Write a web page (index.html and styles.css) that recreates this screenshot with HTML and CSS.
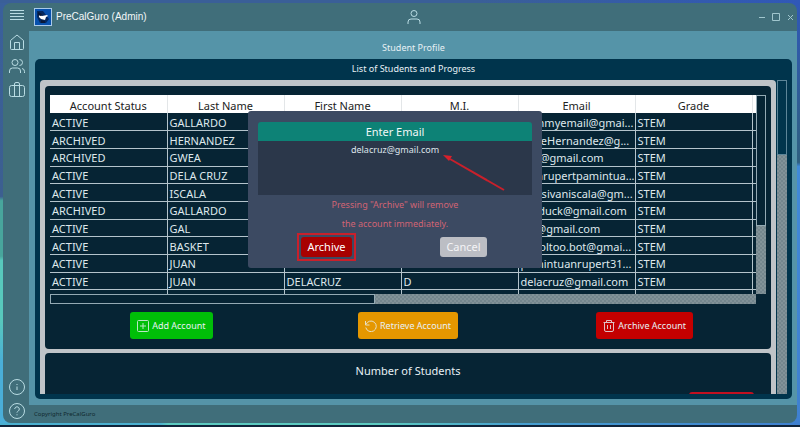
FILE: index.html
```html
<!DOCTYPE html>
<html lang="en">
<head>
<meta charset="utf-8">
<title>PreCalGuro (Admin)</title>
<link rel="stylesheet" href="styles.css">
</head>
<body>
<div class="window">
  <nav class="sidebar">
    <button class="icon-btn menu" aria-label="Menu"><svg viewBox="0 0 16 16"><path d="M1 3.500h14M1 6.500h14M1 9.500h14M1 12.500h14"/></svg></button>
    <button class="icon-btn" aria-label="Home"><svg viewBox="0 0 16 16"><path d="M1.5 6.5 8 1l6.500 5.500v8a1 1 0 0 1-1 1h-11a1 1 0 0 1-1-1zM5.500 15.500v-7h5v7"/></svg></button>
    <button class="icon-btn" aria-label="Students"><svg viewBox="0 0 16 16"><circle cx="6" cy="4.500" r="3"/><path d="M.5 15v-2a3 3 0 0 1 3-3h5a3 3 0 0 1 3 3v2M10.500 1.500a3 3 0 0 1 0 6M13 10.500a3 3 0 0 1 2.500 3V15"/></svg></button>
    <button class="icon-btn" aria-label="Portfolio"><svg viewBox="0 0 16 16"><rect x=".5" y="3.500" width="15" height="11" rx="2"/><path d="M5.500 14.500V2a1.500 1.500 0 0 1 1.500-1.500h2A1.500 1.500 0 0 1 10.500 2v12.500"/></svg></button>
    <span class="grow"></span>
    <button class="icon-btn" aria-label="Information"><svg viewBox="0 0 16 16"><circle cx="8" cy="8" r="7.500"/><path d="M8 7.500V11M8 5v1"/></svg></button>
    <button class="icon-btn" aria-label="Help"><svg viewBox="0 0 16 16"><circle cx="8" cy="8" r="7.500"/><path d="M5.700 6a2.300 2.300 0 1 1 3.600 2C8.300 8.600 8 9 8 9.700M8 11.300v1"/></svg></button>
  </nav>
  <div class="workspace">
    <header class="titlebar">
      <div class="brand">
        <svg class="logo" viewBox="0 0 18 18"><path fill="#a9c9e8" d="M0 0h18v18H0z"/><path fill="#0750ad" d="M1 1h16v16H1z"/><path fill="#05285e" d="M3 3h6l6 8-3 4H6L3 9z"/><path fill="#fff" d="m5 7 3 1 5-1 1 1-2 1-1 3-4-1-2-2z"/><path fill="#0b1836" d="m4 4 4 2-1 2-3-1zm3 8 4 1v2H7z"/></svg>
        <span>PreCalGuro (Admin)</span>
      </div>
      <button class="profile" aria-label="Profile"><svg viewBox="0 0 14 14"><circle cx="7" cy="3.500" r="3"/><path d="M1 14v-2a3 3 0 0 1 3-3h6a3 3 0 0 1 3 3v2"/></svg></button>
      <div class="controls">
        <button aria-label="Minimize"><svg viewBox="0 0 8 8"><path d="M1 4.500h6"/></svg></button>
        <button aria-label="Maximize"><svg viewBox="0 0 8 8"><path d="M.5.500h7v7h-7z"/></svg></button>
        <button aria-label="Close"><svg viewBox="0 0 8 8"><path d="m2 2 5 5M7 2 2 7"/></svg></button>
      </div>
    </header>
    <main class="content">
      <h1 class="page-title">Student Profile</h1>
      <section class="panel">
        <h2 class="panel-title">List of Students and Progress</h2>
        <div class="scroll-area">
          <div class="cards">
            <div class="card list-card">
              <div class="table-row">
                <table class="students">
                  <thead><tr><th>Account Status</th><th>Last Name</th><th>First Name</th><th>M.I.</th><th>Email</th><th>Grade</th><th class="sliver"></th></tr></thead>
                  <tbody>
                    <tr><td>ACTIVE</td><td>GALLARDO</td><td></td><td></td><td>dummyemail@gmai...</td><td>STEM</td><td></td></tr>
                    <tr><td>ARCHIVED</td><td>HERNANDEZ</td><td></td><td></td><td>JackeHernandez@g...</td><td>STEM</td><td></td></tr>
                    <tr><td>ARCHIVED</td><td>GWEA</td><td></td><td></td><td>gea@gmail.com</td><td>STEM</td><td></td></tr>
                    <tr><td>ACTIVE</td><td>DELA CRUZ</td><td></td><td></td><td>juanrupertpamintua...</td><td>STEM</td><td></td></tr>
                    <tr><td>ACTIVE</td><td>ISCALA</td><td></td><td></td><td>jesusivaniscala@gm...</td><td>STEM</td><td></td></tr>
                    <tr><td>ARCHIVED</td><td>GALLARDO</td><td></td><td></td><td>mriduck@gmail.com</td><td>STEM</td><td></td></tr>
                    <tr><td>ACTIVE</td><td>GAL</td><td></td><td></td><td>gal@gmail.com</td><td>STEM</td><td></td></tr>
                    <tr><td>ACTIVE</td><td>BASKET</td><td></td><td></td><td>hcooltoo.bot@gmai...</td><td>STEM</td><td></td></tr>
                    <tr><td>ACTIVE</td><td>JUAN</td><td></td><td></td><td>pamintuanrupert31...</td><td>STEM</td><td></td></tr>
                    <tr><td>ACTIVE</td><td>JUAN</td><td>DELACRUZ</td><td>D</td><td>delacruz@gmail.com</td><td>STEM</td><td></td></tr>
                    <tr class="rest"><td></td><td></td><td></td><td></td><td></td><td></td><td></td></tr>
                  </tbody>
                </table>
                <div class="bar vertical table-bar"><span class="thumb"></span></div>
              </div>
              <div class="bar horizontal"><span class="thumb"></span></div>
              <div class="actions">
                <button class="action add"><svg viewBox="0 0 12 12"><rect x=".5" y=".5" width="11" height="11" rx="1"/><path d="M6 3v6M3 6h6"/></svg>Add Account</button>
                <button class="action retrieve"><svg viewBox="0 0 12 12"><path d="M.5 1v4h4M1 4.500a5.300 5.300 0 1 1-.2 3"/></svg>Retrieve Account</button>
                <button class="action archive"><svg viewBox="0 0 12 12"><path d="M.5 2.500h11M3.500 2.500v-2h5v2M1.500 2.500V10a1.500 1.500 0 0 0 1.500 1.500h6a1.500 1.500 0 0 0 1.500-1.500V2.500M4.500 5v4M7.500 5v4"/></svg>Archive Account</button>
              </div>
            </div>
            <div class="card count-card">
              <h2 class="count-title">Number of Students</h2>
              <span class="count-mark"></span>
            </div>
          </div>
          <div class="bar vertical page-bar"><span class="thumb"></span></div>
        </div>
      </section>
    </main>
    <footer class="footer">Copyright PreCalGuro</footer>
  </div>
</div>
<div class="dialog" role="dialog" aria-label="Archive account">
  <label class="dialog-title" for="email">Enter Email</label>
  <textarea class="email" id="email" spellcheck="false">delacruz@gmail.com</textarea>
  <p class="warning">Pressing "Archive" will remove<br>the account immediately.</p>
  <div class="choices">
    <div class="choice"><span class="focus-box"><button class="choice-btn confirm">Archive</button></span></div>
    <div class="choice"><button class="choice-btn cancel">Cancel</button></div>
  </div>
  <svg class="arrow" viewBox="0 0 64 38"><path d="M62 36 8 5" stroke="#c9202b" stroke-width="2" fill="none"/><path d="m1 1 9 1-3 5z" fill="#d9202b"/></svg>
</div>
</body>
</html>
```

FILE: styles.css
```css
* { box-sizing: border-box; }

body {
  margin: 0;
  height: 100vh;
  padding: 3px 3px 4px;
  background:
    linear-gradient(#10243a, #10243a) bottom / 100% 2px no-repeat,
    linear-gradient(90deg, #4ab0d0 0, #4ab0d0 20%, #5ccac0 21%, #5ccac0 48%, #469fd0 65%, #3f80d0) bottom / 100% 4px no-repeat,
    linear-gradient(90deg, #3a5f98 60%, #3058b8) top / 100% 3px no-repeat,
    linear-gradient(#3a609c 0, #3c5f90 46%, #48a59c 47%, #48a59c 60%, #58c8bc 61%, #58c8bc 75%, #4aaed8 85%) left / 50% 100% no-repeat,
    linear-gradient(#3058b8 0, #2f6080 38%, #408ad8 39%, #3f80d0);
  color: #e8f1f5;
  font: 9px/14px "Noto Sans", "Open Sans", sans-serif;
  overflow: hidden;
}

button {
  border: 0;
  padding: 0;
  background: none;
  color: inherit;
  font: inherit;
}

h1, h2, p { margin: 0; font-weight: normal; }

svg {
  display: block;
  fill: none;
  stroke: currentColor;
}

.window {
  display: flex;
  height: 100%;
  border-radius: 8px;
  overflow: hidden;
  background: #406e7a;
}

.sidebar {
  display: flex;
  flex-direction: column;
  align-items: center;
  gap: 8px;
  flex: 0 0 26px;
  padding: 4px 0 4px 2px;
  color: #b9dce3;
}

.icon-btn svg { width: 16px; height: 16px; }
.menu { margin-bottom: 3px; }
.grow { flex: 1; }

.workspace {
  display: flex;
  flex: 1;
  flex-direction: column;
  min-width: 0;
}

.titlebar {
  display: grid;
  grid-template-columns: 1fr auto 1fr;
  align-items: center;
  flex: 0 0 28px;
  padding: 0 3px 0 5px;
  color: #b9dce3;
}

.brand {
  display: flex;
  align-items: center;
  gap: 4px;
  color: #f2f7f8;
  font: 10px/14px "Liberation Sans", sans-serif;
}

.logo { width: 18px; height: 18px; stroke: none; }
.profile svg { width: 14px; height: 14px; }
.controls { display: flex; justify-content: flex-end; gap: 6px; }
.controls svg { width: 8px; height: 8px; opacity: 0.8; }

.content {
  display: flex;
  flex: 1;
  flex-direction: column;
  min-height: 0;
  padding: 0 5px 6px 6px;
  background: #5594a8;
}

.page-title {
  padding: 10px 0 4px;
  font-size: 9px;
  line-height: 14px;
  text-align: center;
}

.panel {
  display: flex;
  flex: 1;
  flex-direction: column;
  min-height: 0;
  padding: 0 5px 5px;
  border-radius: 5px;
  background: #00344c;
}

.panel-title {
  padding: 3px 0 4px;
  font-size: 9px;
  line-height: 14px;
  text-align: center;
}

.scroll-area {
  display: flex;
  flex: 1;
  min-height: 0;
  gap: 1px;
  overflow: hidden;
}

.cards {
  display: flex;
  flex: 1;
  flex-direction: column;
  gap: 4px;
  padding: 6px 5px 0;
  border-radius: 4px 4px 0 0;
  background: #bfc4c8;
}

.card { border-radius: 4px; background: #062434; }
.list-card { padding: 9px 5px 10px; }

.table-row { display: flex; }

.students {
  flex: 1;
  width: 100%;
  height: 199px;
  border-collapse: collapse;
  table-layout: fixed;
  color: #dfe8ec;
  font-size: 11px;
  line-height: 15px;
}

.students th {
  height: 18px;
  padding: 2px 0 0;
  border-right: 1px solid #e3e6e8;
  background: #fff;
  color: #222;
  font-weight: normal;
}

.students .sliver { width: 4px; }

.students td {
  height: 17px;
  padding: 1px 0 0 2px;
  border: solid #b4c4cc;
  border-width: 0 1px 1px 0;
  overflow: hidden;
  white-space: nowrap;
}

.students th:last-child, .students td:last-child { border-right: 0; }
.students .rest td { height: 4px; padding: 0; border-bottom: 0; }

.bar {
  background: repeating-conic-gradient(#829298 0 25%, #74868d 0 50%) 0 0 / 4px 4px;
}

.thumb {
  display: block;
  border: 1px solid #94aab4;
  background: #062434;
}

.vertical { flex: 0 0 10px; }
.vertical .thumb { height: 131px; }
.page-bar .thumb { height: 75px; background: #00344c; border-color: #5d8598; }
.horizontal { height: 10px; margin-right: 10px; }
.horizontal .thumb { width: 46%; height: 10px; }

.actions {
  display: grid;
  grid-template-columns: repeat(3, 1fr);
  justify-items: center;
  padding: 8px 3px 0;
}

.action {
  display: flex;
  align-items: center;
  gap: 3px;
  height: 27px;
  padding: 0 7px;
  border-radius: 3px;
}

.action svg { width: 12px; height: 12px; opacity: 0.8; }
.add { background: #00be08; }
.retrieve { background: #e59700; }
.archive { background: #c40000; }

.count-card {
  display: flex;
  flex: 1 0 60px;
  flex-direction: column;
}

.count-title {
  padding: 9px 0 13px;
  font-size: 11px;
  line-height: 17px;
  text-align: center;
}

.count-mark {
  align-self: flex-end;
  width: 65px;
  height: 20px;
  margin-right: 17px;
  border-radius: 3px;
  background: #c01020;
}

.footer {
  flex: 0 0 18px;
  padding: 2px 5px;
  color: #102a30;
  font-size: 6px;
}

.dialog {
  position: absolute;
  top: 111px;
  left: 248px;
  width: 294px;
  padding: 11px 10px 7px;
  border-radius: 3px;
  background: #3c4a62;
}

.dialog-title {
  display: block;
  border-radius: 3px 3px 0 0;
  background: #0d8276;
  color: #f2f8f8;
  font-size: 11px;
  line-height: 19px;
  text-align: center;
}

.email {
  display: block;
  width: 100%;
  height: 54px;
  padding: 2px 0;
  border: 0;
  background: #2b374a;
  color: #dfe5ec;
  font: 9px/14px "Noto Sans", "Open Sans", sans-serif;
  text-align: center;
  resize: none;
  overflow: hidden;
}

.warning {
  color: #d06474;
  font-size: 9px;
  line-height: 19px;
  text-align: center;
}

.choices { display: grid; grid-template-columns: 1fr 1fr; }
.choice { display: flex; align-items: center; justify-content: center; }
.focus-box { padding: 2px; border: 2px solid #c9202b; }

.choice-btn {
  display: block;
  height: 20px;
  border-radius: 3px;
  padding: 0 6px;
  font-size: 11px;
  line-height: 20px;
}

.confirm { background: #a80000; color: #fff; }
.cancel { background: #bcbec4; color: #f4f4f6; }

.arrow {
  position: absolute;
  top: 43px;
  left: 194px;
  width: 64px;
  height: 38px;
  stroke: none;
}
```
